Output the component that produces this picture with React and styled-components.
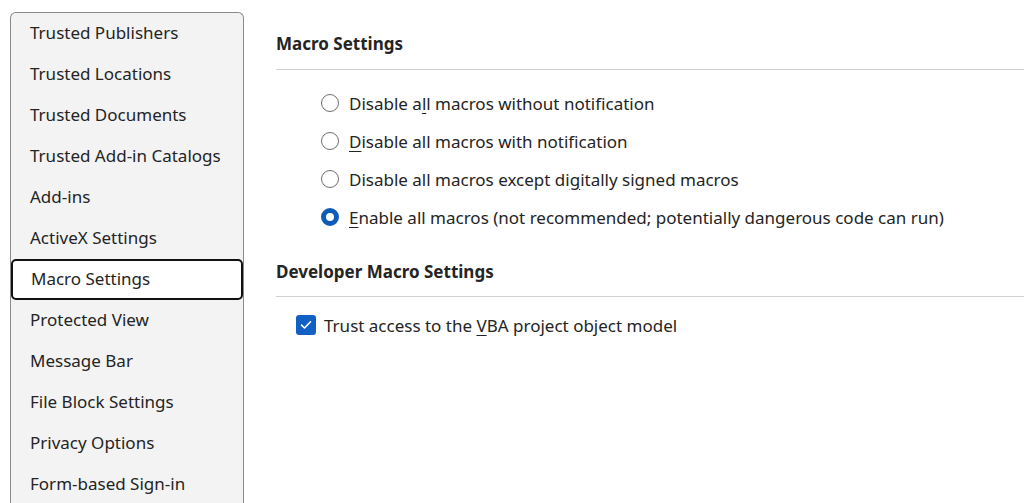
import React from "react"
import styled, { createGlobalStyle } from "styled-components"

const GlobalStyle = createGlobalStyle`
  html, body {
    margin: 0;
    padding: 0;
    background: #ffffff;
    overflow: hidden;
  }
  body {
    font-family: "Noto Sans", "Open Sans", sans-serif;
    color: #242424;
  }
`

const Page = styled.div`
  display: flex;
  width: 1024px;
  height: 503px;
  overflow: hidden;
`

const SideWrap = styled.div`
  padding: 12px 0 0 10px;
  width: 234px;
  flex: none;
`

const SideNav = styled.nav`
  background: #f3f3f3;
  border: 1px solid #8a8a8a;
  border-bottom: none;
  border-radius: 6px 6px 0 0;
  height: 520px;
  box-sizing: border-box;
`

const NavItem = styled.div`
  height: 41px;
  display: flex;
  align-items: center;
  box-sizing: border-box;
  padding-left: ${(p) => (p.$active ? "18px" : "19px")};
  padding-bottom: 2px;
  font-size: 17px;
  color: #242424;
  background: ${(p) => (p.$active ? "#ffffff" : "transparent")};
  border: ${(p) => (p.$active ? "2px solid #111" : "none")};
  border-radius: ${(p) => (p.$active ? "5px" : "0")};
`

const Main = styled.main`
  flex: 1;
  margin-left: 32px;
  padding-top: 30px;
`

const Heading = styled.h2`
  margin: 0;
  font-size: 17px;
  font-weight: 700;
  line-height: 28px;
  color: #242424;
  padding-bottom: ${(p) => p.$pb || "11px"};
  border-bottom: 1px solid #d1d1d1;
`

const OptionList = styled.div`
  display: flex;
  flex-direction: column;
  padding: ${(p) => p.$pad};
`

const Row = styled.label`
  display: flex;
  align-items: center;
  height: ${(p) => p.$h || "38px"};
  font-size: 17px;
  color: #242424;
`

const Radio = styled.span`
  width: 18px;
  height: 18px;
  box-sizing: border-box;
  border-radius: 50%;
  flex: none;
  margin: 0 10px 0 45px;
  background: #fff;
  border: ${(p) => (p.$checked ? "5px solid #0f5cb8" : "1px solid #6e6e6e")};
`

const Check = styled.span`
  width: 20px;
  height: 20px;
  border-radius: 3px;
  background: #1360c4;
  flex: none;
  margin: 0 8px 0 20px;
  display: flex;
  align-items: center;
  justify-content: center;
`

const Key = styled.span`
  text-decoration: underline;
  text-underline-offset: 3px;
  text-decoration-thickness: 1px;
`

const navItems = [
  "Trusted Publishers",
  "Trusted Locations",
  "Trusted Documents",
  "Trusted Add-in Catalogs",
  "Add-ins",
  "ActiveX Settings",
  "Macro Settings",
  "Protected View",
  "Message Bar",
  "File Block Settings",
  "Privacy Options",
  "Form-based Sign-in",
]

const App = () => {
  return (
    <Page>
      <GlobalStyle />
      <SideWrap>
        <SideNav>
          {navItems.map((item) => (
            <NavItem key={item} $active={item === "Macro Settings"}>
              {item}
            </NavItem>
          ))}
        </SideNav>
      </SideWrap>
      <Main>
        <Heading>Macro Settings</Heading>
        <OptionList $pad="14px 0 22px">
          <Row>
            <Radio />
            <span>
              Disable a<Key>l</Key>l macros without notification
            </span>
          </Row>
          <Row>
            <Radio />
            <span>
              <Key>D</Key>isable all macros with notification
            </span>
          </Row>
          <Row>
            <Radio />
            <span>
              Disable all macros except di<Key>g</Key>itally signed macros
            </span>
          </Row>
          <Row>
            <Radio $checked />
            <span>
              <Key>E</Key>nable all macros (not recommended; potentially dangerous code can run)
            </span>
          </Row>
        </OptionList>
        <Heading $pb="10px">Developer Macro Settings</Heading>
        <OptionList $pad="9px 0 0">
          <Row>
            <Check>
              <svg width="12" height="10" viewBox="0 0 12 10">
                <path d="M1.5 5.2 L4.5 8 L10.5 1.8" fill="none" stroke="#fff" strokeWidth="1.6" strokeLinecap="round" strokeLinejoin="round" />
              </svg>
            </Check>
            <span>
              Trust access to the <Key>V</Key>BA project object model
            </span>
          </Row>
        </OptionList>
      </Main>
    </Page>
  )
}

export default App
